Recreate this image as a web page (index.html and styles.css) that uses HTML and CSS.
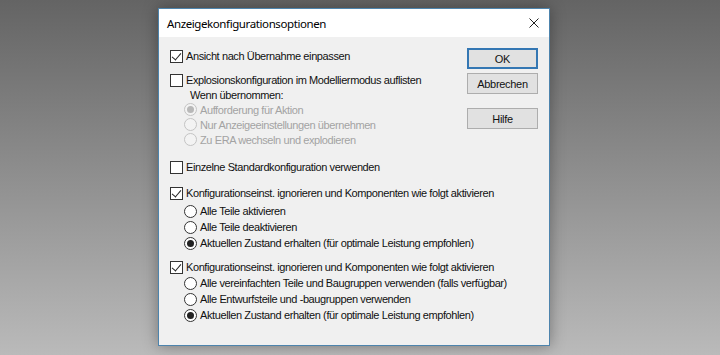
FILE: index.html
```html
<!DOCTYPE html>
<html lang="de">

<head>
    <meta charset="utf-8" />
    <title>Anzeigekonfigurationsoptionen</title>
    <link rel="stylesheet" href="styles.css">
</head>

<body>
    <div class="dialog">
        <div class="titlebar">
            <span class="title">Anzeigekonfigurationsoptionen</span>
            <svg class="close" width="10" height="10" viewBox="0 0 10 10">
                <path d="M0.5 0.5 L9.5 9.5 M9.5 0.5 L0.5 9.5" stroke="#222" stroke-width="1" fill="none" />
            </svg>
        </div>
        <div class="content">
            <div class="options">
                <div class="row">
                    <span class="check on"></span>Ansicht nach Übernahme einpassen
                </div>
                <div class="row gap-small">
                    <span class="check"></span>Explosionskonfiguration im Modelliermodus auflisten
                </div>
                <div class="sub disabled">
                    <div class="row tight label">Wenn übernommen:</div>
                    <div class="row tight"><span class="radio on"></span>Aufforderung für Aktion</div>
                    <div class="row tight"><span class="radio"></span>Nur Anzeigeeinstellungen übernehmen</div>
                    <div class="row tight"><span class="radio"></span>Zu ERA wechseln und explodieren</div>
                </div>
                <div class="row gap-large">
                    <span class="check"></span>Einzelne Standardkonfiguration verwenden
                </div>
                <div class="row gap-mid">
                    <span class="check on"></span>Konfigurationseinst. ignorieren und Komponenten wie folgt aktivieren
                </div>
                <div class="sub first">
                    <div class="row"><span class="radio"></span>Alle Teile aktivieren</div>
                    <div class="row"><span class="radio"></span>Alle Teile deaktivieren</div>
                    <div class="row"><span class="radio on"></span>Aktuellen Zustand erhalten (für optimale Leistung empfohlen)</div>
                </div>
                <div class="row gap-small">
                    <span class="check on"></span>Konfigurationseinst. ignorieren und Komponenten wie folgt aktivieren
                </div>
                <div class="sub">
                    <div class="row"><span class="radio"></span>Alle vereinfachten Teile und Baugruppen verwenden (falls verfügbar)</div>
                    <div class="row"><span class="radio"></span>Alle Entwurfsteile und -baugruppen verwenden</div>
                    <div class="row"><span class="radio on"></span>Aktuellen Zustand erhalten (für optimale Leistung empfohlen)</div>
                </div>
            </div>
            <div class="buttons">
                <button class="btn default">OK</button>
                <button class="btn">Abbrechen</button>
                <button class="btn help">Hilfe</button>
            </div>
        </div>
    </div>
</body>

</html>
```

FILE: styles.css
```css
html {
    height: 100%;
}

body {
    margin: 0;
    height: 100%;
    overflow: hidden;
    background: linear-gradient(to bottom, #646464, #bababa);
    font-family: "Liberation Sans", Arial, sans-serif;
    font-size: 11px;
    letter-spacing: -0.4px;
    color: #111;
}

.dialog {
    margin: 8px 0 0 158px;
    width: 390px;
    height: 336px;
    border: 1px solid #4d84ad;
    background: #f0f0f0;
    box-shadow: 0 0 14px rgba(0, 0, 0, 0.35);
    display: flex;
    flex-direction: column;
}

.titlebar {
    height: 28px;
    background: #ffffff;
    display: flex;
    align-items: center;
    justify-content: space-between;
    padding: 0 10px 0 8px;
}

.title {
    font-family: "Noto Sans", sans-serif;
    font-size: 11.5px;
    letter-spacing: -0.4px;
    color: #000;
    margin-top: 1px;
}

.content {
    display: flex;
    padding: 11px 0 0 11px;
}

.options {
    display: flex;
    flex-direction: column;
    width: 297px;
    white-space: nowrap;
}

.row {
    height: 16px;
    display: flex;
    align-items: center;
}

.row.tight {
    height: 15px;
}

.gap-small {
    margin-top: 8px;
}

.gap-mid {
    margin-top: 10px;
}

.gap-large {
    margin-top: 12px;
}

.sub {
    padding-left: 14px;
}

.sub.first {
    margin-top: 2px;
}

.sub.disabled {
    margin-top: -1px;
    color: #a3a3a3;
}

.sub .label {
    padding-left: 6px;
    color: #111;
}

.check {
    box-sizing: border-box;
    width: 13px;
    height: 13px;
    border: 1px solid #333;
    background: #fff;
    margin-right: 3px;
    flex: none;
    position: relative;
}

.check.on::after {
    content: "";
    position: absolute;
    left: 3px;
    top: 0px;
    width: 4px;
    height: 8px;
    border-right: 1px solid #222;
    border-bottom: 1px solid #222;
    transform: rotate(40deg);
}

.radio {
    box-sizing: border-box;
    width: 13px;
    height: 13px;
    border: 1px solid #333;
    border-radius: 50%;
    background: #fff;
    margin-right: 3px;
    flex: none;
    display: flex;
    align-items: center;
    justify-content: center;
}

.radio.on::after {
    content: "";
    width: 7px;
    height: 7px;
    border-radius: 50%;
    background: #222;
}

.disabled .radio {
    border-color: #c4c4c4;
    background: #f3f3f3;
}

.disabled .radio.on::after {
    background: #b8b8b8;
}

.buttons {
    display: flex;
    flex-direction: column;
}

.btn {
    box-sizing: border-box;
    width: 71px;
    height: 21px;
    margin-bottom: 3px;
    border: 1px solid #adadad;
    background: #e1e1e1;
    font-family: "Liberation Sans", Arial, sans-serif;
    font-size: 11px;
    letter-spacing: -0.3px;
    color: #111;
    padding: 0;
}

.btn.default {
    border: 2px solid #3477b3;
    margin-bottom: 4px;
}

.btn.help {
    margin-top: 11px;
}
```
